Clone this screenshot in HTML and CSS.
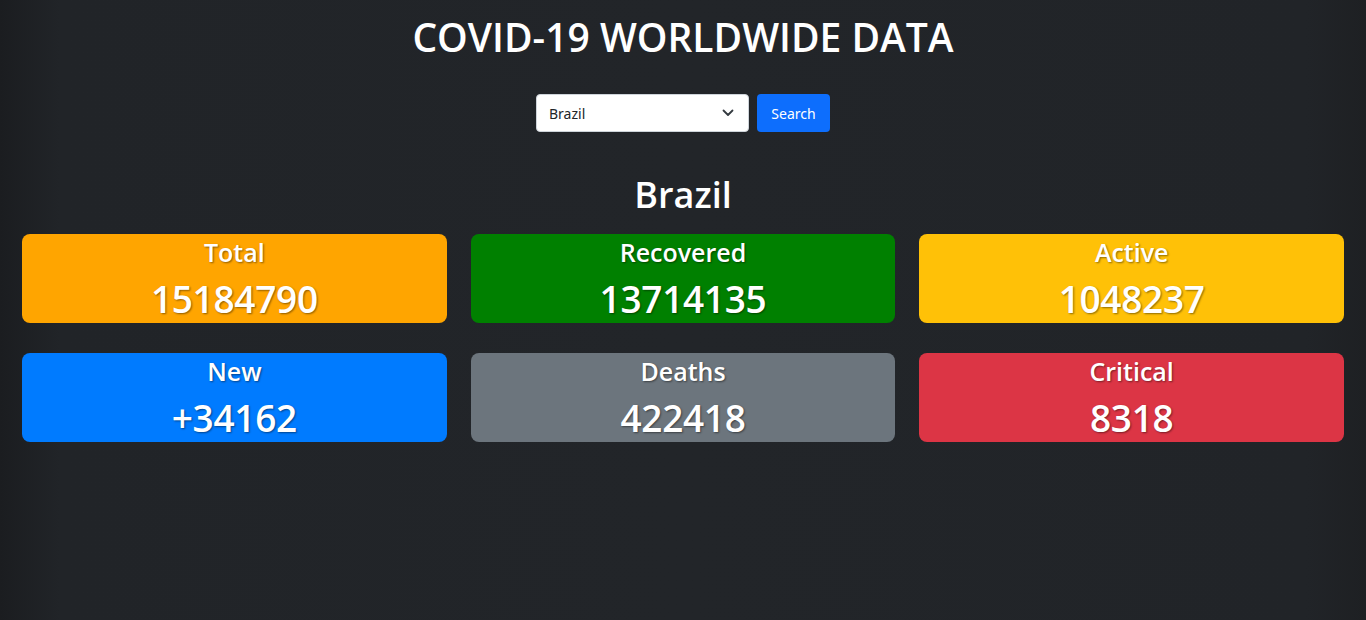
FILE: index.html
```html
<!DOCTYPE html>
<html>
<head>
<meta charset="utf-8">
<link rel="stylesheet" href="styles.css">
</head>
<body>
<div class="page">
  <h1 class="title">COVID-19 WORLDWIDE DATA</h1>
  <form class="search">
    <div class="select">
      <span>Brazil</span>
      <svg width="12" height="8" viewBox="0 0 12 8"><path d="M1.5 1.5 L6 6 L10.5 1.5" fill="none" stroke="#343a40" stroke-width="1.8" stroke-linecap="round" stroke-linejoin="round"/></svg>
    </div>
    <button type="button" class="btn">Search</button>
  </form>
  <h2 class="country">Brazil</h2>
  <div class="grid">
    <div class="card orange"><div class="label">Total</div><div class="num">15184790</div></div>
    <div class="card green"><div class="label">Recovered</div><div class="num">13714135</div></div>
    <div class="card yellow"><div class="label">Active</div><div class="num">1048237</div></div>
    <div class="card blue"><div class="label">New</div><div class="num">+34162</div></div>
    <div class="card gray"><div class="label">Deaths</div><div class="num">422418</div></div>
    <div class="card red"><div class="label">Critical</div><div class="num">8318</div></div>
  </div>
</div>
</body>
</html>
```
FILE: styles.css
```css
html, body { margin: 0; height: 100%; }
body {
  background: #212529;
  background-image: linear-gradient(to right, #1b1d20 0px, #212428 60px, #222529 50%, #212428 calc(100% - 60px), #1e2023 100%);
  font-family: "Open Sans", "Noto Sans", sans-serif;
  color: #fff;
}
.page { padding: 0 22px; }
.title {
  margin: 0;
  padding-top: 13px;
  text-align: center;
  font-size: 39px;
  font-weight: 600;
  line-height: 48px;
}
.search {
  display: flex;
  justify-content: center;
  gap: 8px;
  margin-top: 33px;
}
.select {
  width: 213px;
  height: 38px;
  box-sizing: border-box;
  background: #fff;
  border: 1px solid #ced4da;
  border-radius: 4px;
  display: flex;
  align-items: center;
  justify-content: space-between;
  padding: 0 14px 0 12px;
  color: #212529;
  font-family: "Noto Sans", sans-serif;
  font-size: 14px;
}
.btn {
  height: 38px;
  width: 73px;
  background: #0d6efd;
  border: 0;
  border-radius: 4px;
  color: #fff;
  font-family: "Noto Sans", sans-serif;
  font-size: 14px;
  padding: 0;
}
.country {
  margin: 40px 0 0;
  text-align: center;
  font-size: 36px;
  font-weight: 600;
  line-height: 46px;
}
.grid {
  display: grid;
  grid-template-columns: repeat(3, 1fr);
  column-gap: 24px;
  row-gap: 30px;
  margin-top: 16px;
}
.card {
  height: 89px;
  border-radius: 8px;
  text-align: center;
  text-shadow: 1px 1px 2px rgba(0,0,0,0.45);
}
.label {
  font-size: 25px;
  font-weight: 600;
  line-height: 34px;
  padding-top: 1px;
}
.num {
  margin-top: 7px;
  font-size: 37px;
  font-weight: 600;
  line-height: 46px;
  letter-spacing: -0.3px;
}
.orange { background: #ffa500; }
.green { background: #008000; }
.yellow { background: #ffc107; }
.blue { background: #007bff; }
.gray { background: #6c757d; }
.red { background: #dc3545; }
```
